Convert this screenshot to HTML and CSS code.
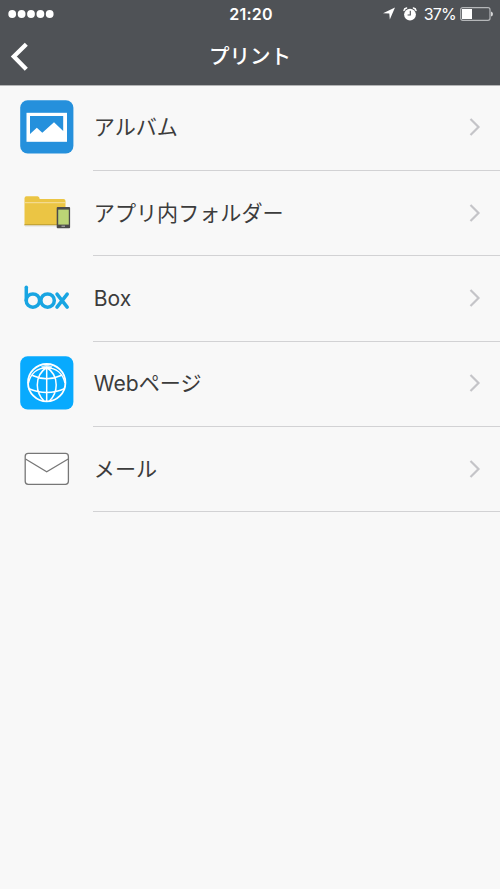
FILE: index.html
```
<!DOCTYPE html>
<html lang="ja">
<head>
<meta charset="utf-8">
<title>プリント</title>
<link rel="stylesheet" href="styles.css">
</head>
<body>
<header class="header">
  <div class="status">
    <svg class="signal" width="46" height="10" viewBox="0 0 46 10" fill="#fff"><circle cx="4.2" cy="5" r="3.9"/><circle cx="13.6" cy="5" r="3.9"/><circle cx="23" cy="5" r="3.9"/><circle cx="32.4" cy="5" r="3.9"/><circle cx="41.7" cy="5" r="3.9"/></svg>
    <span class="time">21:20</span>
    <div class="indicators">
      <svg width="12" height="13" viewBox="0 0 12 13"><path d="M12 0.5L6.8 12.4L6.3 6.6L0 6.2Z" fill="#fff"/></svg>
      <svg class="alarm" width="14" height="14" viewBox="0 0 14 14"><circle cx="7" cy="7.6" r="5.9" fill="#fff"/><path d="M1 3.5Q1.2 1.5 3.6 1M13 3.5Q12.8 1.5 10.4 1" fill="none" stroke="#fff" stroke-width="1.5" stroke-linecap="round"/><path d="M7.3 3.8V8H4.6" fill="none" stroke="#4f5256" stroke-width="1.1"/></svg>
      <span class="percent">37%</span>
      <svg class="battery" width="34" height="14" viewBox="0 0 34 14"><rect x=".7" y=".7" width="29.3" height="12.6" rx="2" fill="none" stroke="#b5b7b9" stroke-width="1.2"/><rect x="2" y="2" width="10" height="10" fill="#fff"/><path d="M31 4.5Q33 5 33 7T31 9.5Z" fill="#d5d6d7"/></svg>
    </div>
  </div>
  <nav class="navbar">
    <svg class="back" width="20" height="30" viewBox="0 0 20 30"><path d="M18.3 2.2L5.8 14.5L18.3 27.2" fill="none" stroke="#fff" stroke-width="4.3"/></svg>
    <h1 class="title">プリント</h1>
  </nav>
</header>
<main class="list">
  <div class="row">
    <svg class="icon" viewBox="0 0 54 54"><rect x=".2" y=".2" width="53.2" height="53.2" rx="7.5" fill="#2590dc"/><rect x="6.5" y="12.8" width="40.5" height="29" fill="#fff"/><path d="M10 16H43.2V31L34 22.3L22.3 32.7L16.8 27.7L10 34Z" fill="#2590dc"/></svg>
    <div class="content"><span class="label">アルバム</span><svg class="chevron" viewBox="0 0 12 20"><path d="M1.5 2L9.5 10L1.5 18"/></svg></div>
  </div>
  <div class="row">
    <svg class="icon" viewBox="0 0 54 54"><path d="M4.5 13.2Q4.5 11.2 6.5 11.2H17.5Q19.5 11.2 19.7 14H43.5Q45.5 14 45.5 16V40H4.5Z" fill="#ebc544"/><path d="M4.5 17.7H45.5" stroke="#f6dfa0"/><path d="M4.5 39.9H37" stroke="#b99a30" stroke-width="1.3"/><path d="M5 41H37" stroke="#ddd"/><rect x="36.7" y="22" width="13.4" height="21.2" rx="1" fill="#4b4b4b"/><rect x="38.2" y="24.6" width="10.6" height="15" fill="#bbd476"/><path d="M41.5 41.2H45" stroke="#bbb"/></svg>
    <div class="content"><span class="label">アプリ内フォルダー</span><svg class="chevron" viewBox="0 0 12 20"><path d="M1.5 2L9.5 10L1.5 18"/></svg></div>
  </div>
  <div class="row">
    <svg class="icon" viewBox="0 0 54 54"><g fill="none" stroke="#18a5e2" stroke-width="3.5" stroke-linecap="round"><path d="M6.3 16.2V29.5"/><circle cx="12.9" cy="29.6" r="6.7"/><circle cx="27.6" cy="29.6" r="6.7"/><path d="M37 23.2L47.2 36.2M47.2 23.2L37 36.2"/></g></svg>
    <div class="content"><span class="label">Box</span><svg class="chevron" viewBox="0 0 12 20"><path d="M1.5 2L9.5 10L1.5 18"/></svg></div>
  </div>
  <div class="row">
    <svg class="icon" viewBox="0 0 54 54"><rect x=".2" y=".2" width="53.2" height="53.2" rx="7.5" fill="#08aafe"/><g fill="none" stroke="#fff" stroke-width="1.5"><circle cx="26.7" cy="26.7" r="18.7" stroke-width="1.8"/><path d="M26.7 10.5V45.4M26.7 11.5C19.5 16 17.3 23 17.3 29C17.3 36 20 41 24 45M26.7 11.5C34 16 36.2 23 36.2 29C36.2 36 33.5 41 29.5 45M26.7 11.5C17 12 10.5 18 8.4 27M26.7 11.5C36.4 12 43 18 45 27M12.5 19.5Q26.7 26 41 19.5M8.5 32.5Q26.7 40.5 45 32.5"/></g><path d="M21 10.5L26.7 8.5L32.5 10.5L30 14L26.7 12.5L23.5 14Z" fill="#fff" opacity=".75"/></svg>
    <div class="content"><span class="label">Webページ</span><svg class="chevron" viewBox="0 0 12 20"><path d="M1.5 2L9.5 10L1.5 18"/></svg></div>
  </div>
  <div class="row">
    <svg class="icon" viewBox="0 0 54 54"><rect x="5.2" y="12.4" width="43.2" height="30.9" rx="3" fill="#fff" stroke="#777" stroke-width="1.3"/><path d="M5.5 18L26.7 30.7L48.2 18" fill="none" stroke="#777" stroke-width="1.3"/></svg>
    <div class="content"><span class="label">メール</span><svg class="chevron" viewBox="0 0 12 20"><path d="M1.5 2L9.5 10L1.5 18"/></svg></div>
  </div>
</main>
</body>
</html>
```
FILE: styles.css
```
* { box-sizing: border-box; }
body {
  margin: 0;
  min-height: 889px;
  background: #f8f8f8;
  color: #3c3c3c;
  font-family: Inter, "Noto Sans CJK JP", sans-serif;
}
svg { display: block; flex: none; }
.header {
  height: 85.5px;
  background: #4f5256;
  color: #fff;
  border-bottom: 1px solid #b4b5b6;
}
.status {
  height: 27px;
  display: grid;
  grid-template-columns: 1fr auto 1fr;
  align-items: center;
  padding: 0 6px 0 8px;
}
.time {
  font-size: 16px;
  font-weight: 600;
  letter-spacing: .2px;
}
.indicators {
  display: flex;
  align-items: center;
  justify-content: flex-end;
}
.alarm { margin-left: 8px; }
.percent {
  margin: 0 4px 0 7px;
  font-size: 16px;
  letter-spacing: -.8px;
}
.navbar {
  height: 58px;
  display: grid;
  grid-template-columns: 1fr auto 1fr;
  align-items: center;
  padding: 0 8px;
}
.title {
  margin: 1px 0 0;
  font-size: 20.5px;
  font-weight: 500;
  line-height: 58px;
}
.row {
  height: 85.4px;
  display: flex;
  padding-left: 20px;
}
.icon {
  width: 54px;
  height: 54px;
  margin: 14.4px 19px 0 0;
}
.content {
  flex: 1;
  display: flex;
  align-items: center;
  justify-content: space-between;
  padding: 0 19px .8px .8px;
  border-bottom: 1px solid #d2d2d4;
}
.label {
  padding-top: 1.8px;
  font-size: 21.1px;
  font-weight: 375;
  line-height: 32px;
}
.chevron {
  width: 12px;
  height: 20px;
  fill: none;
  stroke: #c4c4c8;
  stroke-width: 2.2;
}
```
